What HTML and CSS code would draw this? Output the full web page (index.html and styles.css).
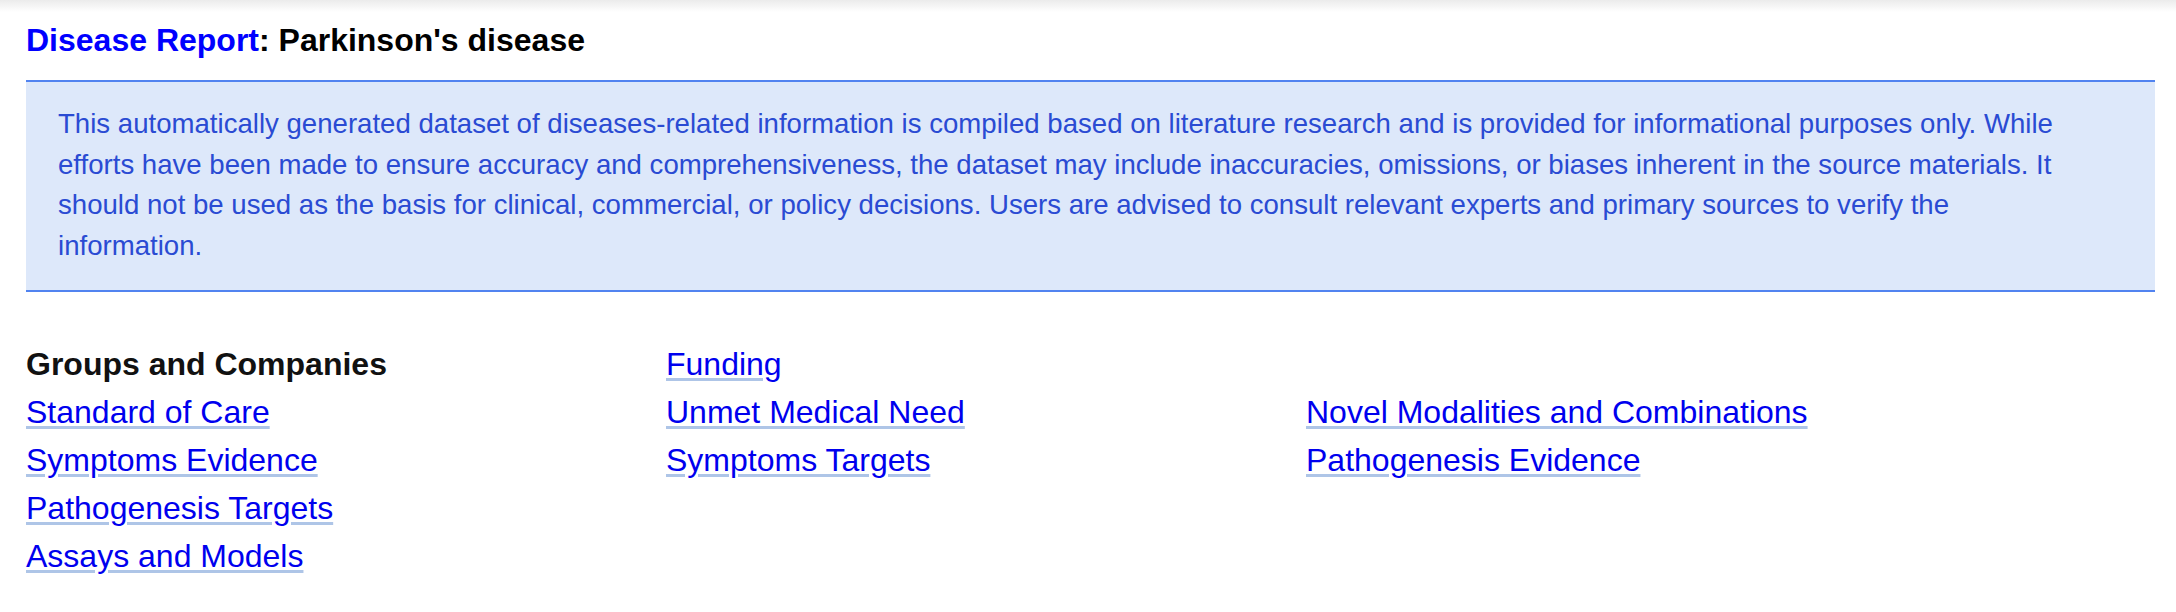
FILE: index.html
```html
<!DOCTYPE html>
<html lang="en">
<head>
    <meta charset="UTF-8">
    <meta name="viewport" content="width=device-width, initial-scale=1.0">
    <title>Disease Report: Parkinson's disease</title>
    <link rel="stylesheet" href="styles.css">
</head>
<body>
    <div class="top-shadow"></div>
    <div class="container">
        <header>
            <h1><a class="report-link" href="#">Disease Report</a>: Parkinson's disease</h1>
        </header>
        <main>
            <div class="notice">
                <p>This automatically generated dataset of diseases-related information is compiled based on literature research and is provided for informational purposes only. While efforts have been made to ensure accuracy and comprehensiveness, the dataset may include inaccuracies, omissions, or biases inherent in the source materials. It should not be used as the basis for clinical, commercial, or policy decisions. Users are advised to consult relevant experts and primary sources to verify the information.</p>
            </div>
            <div class="sections">
                <ul class="section-col">
                    <li class="section-title">Groups and Companies</li>
                    <li><a href="#">Standard of Care</a></li>
                    <li><a href="#">Symptoms Evidence</a></li>
                    <li><a href="#">Pathogenesis Targets</a></li>
                    <li><a href="#">Assays and Models</a></li>
                </ul>
                <ul class="section-col">
                    <li><a href="#">Funding</a></li>
                    <li><a href="#">Unmet Medical Need</a></li>
                    <li><a href="#">Symptoms Targets</a></li>
                </ul>
                <ul class="section-col">
                    <li class="empty"></li>
                    <li><a href="#">Novel Modalities and Combinations</a></li>
                    <li><a href="#">Pathogenesis Evidence</a></li>
                </ul>
            </div>
        </main>
    </div>
</body>
</html>
```

FILE: styles.css
```css
body {
    font-family: "Liberation Sans", Arial, sans-serif;
    background-color: #fff;
    color: #000;
    margin: 0;
    padding: 0;
}

.top-shadow {
    height: 12px;
    background: linear-gradient(#ebebeb, #fff);
}

.container {
    padding: 0 21px 0 26px;
}

header h1 {
    margin: 10px 0 0 0;
    font-size: 32px;
    line-height: 37px;
    font-weight: bold;
}

.report-link {
    color: #0000ff;
    text-decoration: none;
}

.notice {
    margin-top: 21px;
    background-color: #dde8fa;
    border-top: 2px solid #5183f0;
    border-bottom: 2px solid #5183f0;
    padding: 22px 80px 24px 32px;
}

.notice p {
    margin: 0;
    color: #2a4bd3;
    font-size: 27.6px;
    line-height: 40.5px;
}

.sections {
    display: flex;
    margin-top: 48px;
}

.section-col {
    list-style-type: none;
    margin: 0;
    padding: 0;
    width: 640px;
}

.section-col li {
    font-size: 32px;
    line-height: 48px;
    height: 48px;
}

.section-title {
    font-weight: bold;
    color: #111;
}

.section-col a {
    color: #0000ee;
    text-decoration: underline;
    text-decoration-color: #aec5e7;
    text-decoration-thickness: 3px;
    text-underline-offset: 3px;
}
```
